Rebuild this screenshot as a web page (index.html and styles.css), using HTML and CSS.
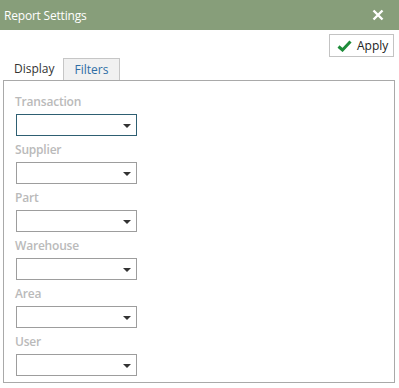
FILE: index.html
```html
<html>
	<head>
		<meta charset="utf-8" />
		<title>Report Settings</title>
		<link rel="stylesheet" href="styles.css">
	</head>
	<body>
		<div class="dialog">
			<div class="titlebar">
				<span class="title">Report Settings</span>
				<span class="close">
					<svg width="12" height="12" viewBox="0 0 12 12"><path d="M1.5 1.5 L10.5 10.5 M10.5 1.5 L1.5 10.5" stroke="#fff" stroke-width="2.4" /></svg>
				</span>
			</div>
			<div class="toolbar">
				<div class="btn">
					<svg width="15" height="12" viewBox="0 0 15 12"><path d="M1.5 6.5 L5.5 10 L13.5 1.5" fill="none" stroke="#1e8c3a" stroke-width="3" /></svg>
					<span>Apply</span>
				</div>
			</div>
			<div class="tabs">
				<div class="tab">Display</div>
				<div class="tab active">Filters</div>
			</div>
			<div class="panel">
				<div class="field">
					<div class="label">Transaction</div>
					<div class="select focus"><span class="arrow"></span></div>
				</div>
				<div class="field">
					<div class="label">Supplier</div>
					<div class="select"><span class="arrow"></span></div>
				</div>
				<div class="field">
					<div class="label">Part</div>
					<div class="select"><span class="arrow"></span></div>
				</div>
				<div class="field">
					<div class="label">Warehouse</div>
					<div class="select"><span class="arrow"></span></div>
				</div>
				<div class="field">
					<div class="label">Area</div>
					<div class="select"><span class="arrow"></span></div>
				</div>
				<div class="field">
					<div class="label">User</div>
					<div class="select"><span class="arrow"></span></div>
				</div>
			</div>
		</div>
	</body>
</html>
```

FILE: styles.css
```css
	* {margin: 0; padding: 0; box-sizing: border-box;}
	body {width: 399px; height: 388px; background: #fff; font-family: "Open Sans", "Noto Sans", sans-serif; font-size: 12px; color: #333;}
/*title*/
	.titlebar {height: 30px; background: #879e7a; display: flex; align-items: center; justify-content: space-between; padding: 0 15px 0 4px;}
	.title {color: #fff; font-size: 12px; letter-spacing: -0.2px;}
	.close {display: flex;}
/*toolbar*/
	.toolbar {display: flex; justify-content: flex-end; padding: 4px 5px 0 0;}
	.btn {height: 23px; width: 65px; border: 1px solid #c3c3c3; display: flex; align-items: center; gap: 5px; padding-left: 7px; color: #222;}
/*tabs*/
	.tabs {display: flex; margin: 1px 0 0 4px; height: 22px;}
	.tab {padding: 0 10px; line-height: 21px; color: #333;}
	.tab.active {background: #f1f1f1; border: 1px solid #c6c6c6; border-bottom: none; padding: 0 11px; color: #2f6ea5; margin-left: -2px;}
/*panel*/
	.panel {margin: 0 4px 0 3px; height: 303px; border: 1px solid #a9a9a9; padding: 10px 0 0 11px;}
	.field {height: 48px;}
	.label {font-weight: 600; color: #bababa; line-height: 20px; height: 23px; padding-top: 1px; letter-spacing: -0.2px;}
	.select {width: 121px; height: 22px; border: 1px solid #9d9d9d; margin-left: 1px; position: relative;}
	.select.focus {border-color: #2e5f72;}
	.arrow {position: absolute; right: 5px; top: 9px; border-left: 4px solid transparent; border-right: 4px solid transparent; border-top: 4px solid #333;}
```
